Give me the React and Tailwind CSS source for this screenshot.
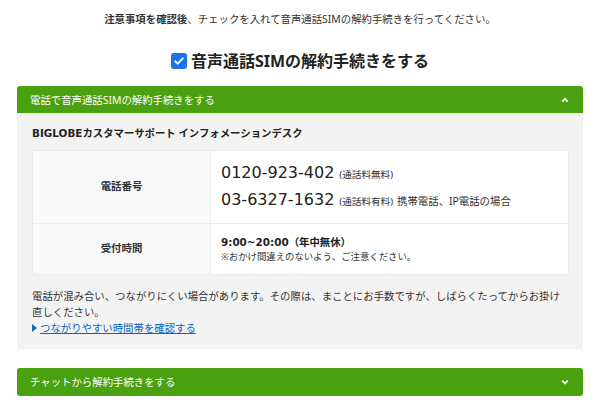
export default function App() {
  const font = "font-['Noto_Sans','Noto_Sans_CJK_JP',sans-serif]";
  const latin = "font-['DejaVu_Sans','Noto_Sans_CJK_JP',sans-serif]";

  return (
    <div className={`w-[600px] h-[400px] bg-white text-[#333] overflow-hidden ${font}`}>
      <div className="px-[17px] pt-[11px]">
        {/* notice line */}
        <p className="text-center text-[10.4px] leading-[16px]">
          <span className="font-bold">注意事項を確認後</span>、チェックを入れて音声通話SIMの解約手続きを行ってください。
        </p>

        {/* checkbox title */}
        <label className="mt-[22px] mb-[13px] flex items-center justify-center gap-[4px] h-[24px]">
          <span className="w-[16px] h-[16px] rounded-[3px] bg-[#1a73e8] flex items-center justify-center">
            <svg width="12" height="12" viewBox="0 0 12 12" fill="none">
              <path d="M2.2 6.2 L4.8 8.7 L9.8 3.3" stroke="#fff" strokeWidth="1.9" strokeLinecap="round" strokeLinejoin="round" />
            </svg>
          </span>
          <span className="text-[16px] font-bold leading-[24px] text-[#222]">音声通話SIMの解約手続きをする</span>
        </label>

        {/* phone accordion */}
        <div className="rounded-[3px] overflow-hidden">
          <div className="h-[27px] bg-[#4aa10f] flex items-center justify-between pl-[13px] pr-[14px] text-white">
            <span className="text-[10.4px] leading-[16px]">電話で音声通話SIMの解約手続きをする</span>
            <svg width="8" height="6" viewBox="0 0 8 6" fill="none">
              <path d="M1.2 4.6 L4 1.8 L6.8 4.6" stroke="#fff" strokeWidth="1.8" />
            </svg>
          </div>

          <div className="bg-[#f3f3f3] px-[15px] pt-[12px] pb-[13px]">
            <p className="text-[10.4px] leading-[16px] font-bold text-[#222]">
              <span className={latin}>BIGLOBE</span>カスタマーサポート インフォメーションデスク
            </p>

            <div className="mt-[9px] mr-[-1px] grid grid-cols-[178px_1fr] bg-white border border-[#ebebeb]">
              <div className="bg-[#f9f9f9] border-r border-b border-[#ebebeb] flex items-center justify-center text-[10.4px] font-bold text-[#333]">
                電話番号
              </div>
              <div className="border-b border-[#ebebeb] pl-[10px] py-[9px]">
                <p className="leading-[24px]">
                  <span className={`text-[16px] text-[#222] ${latin}`}>0120-923-402</span>
                  <span className="text-[9.6px] ml-[5px]">(通話料無料)</span>
                </p>
                <p className="leading-[24px]">
                  <span className={`text-[16px] text-[#222] ${latin}`}>03-6327-1632</span>
                  <span className="text-[9.6px] ml-[5px]">(通話料有料)</span>
                  <span className="text-[10.4px] ml-[4px]">携帯電話、IP電話の場合</span>
                </p>
              </div>
              <div className="bg-[#f9f9f9] border-r border-[#ebebeb] flex items-center justify-center text-[10.4px] font-bold text-[#333]">
                受付時間
              </div>
              <div className="pl-[10px] py-[10px]">
                <p className="text-[10.4px] leading-[16px] font-bold text-[#222]">
                  <span className={latin}>9:00~20:00</span>（年中無休）
                </p>
                <p className="text-[9.4px] leading-[14px]">※おかけ間違えのないよう、ご注意ください。</p>
              </div>
            </div>

            <p className="mt-[13px] text-[10.4px] leading-[16px]">
              電話が混み合い、つながりにくい場合があります。その際は、まことにお手数ですが、しばらくたってからお掛け直しください。
            </p>
            <a href="#" className="flex items-center gap-[3px] text-[10.4px] leading-[16px] text-[#0b63c4]">
              <svg width="5" height="8" viewBox="0 0 5 8">
                <path d="M0 0 L5 4 L0 8 Z" fill="#1464b4" />
              </svg>
              <span className="underline">つながりやすい時間帯を確認する</span>
            </a>
          </div>
        </div>

        {/* chat accordion */}
        <div className="mt-[19px] h-[28px] rounded-[3px] bg-[#4aa10f] flex items-center justify-between pl-[13px] pr-[14px] text-white">
          <span className="text-[10.4px] leading-[16px]">チャットから解約手続きをする</span>
          <svg width="8" height="6" viewBox="0 0 8 6" fill="none">
            <path d="M1.2 1.6 L4 4.4 L6.8 1.6" stroke="#fff" strokeWidth="1.8" />
          </svg>
        </div>
      </div>
    </div>
  );
}
